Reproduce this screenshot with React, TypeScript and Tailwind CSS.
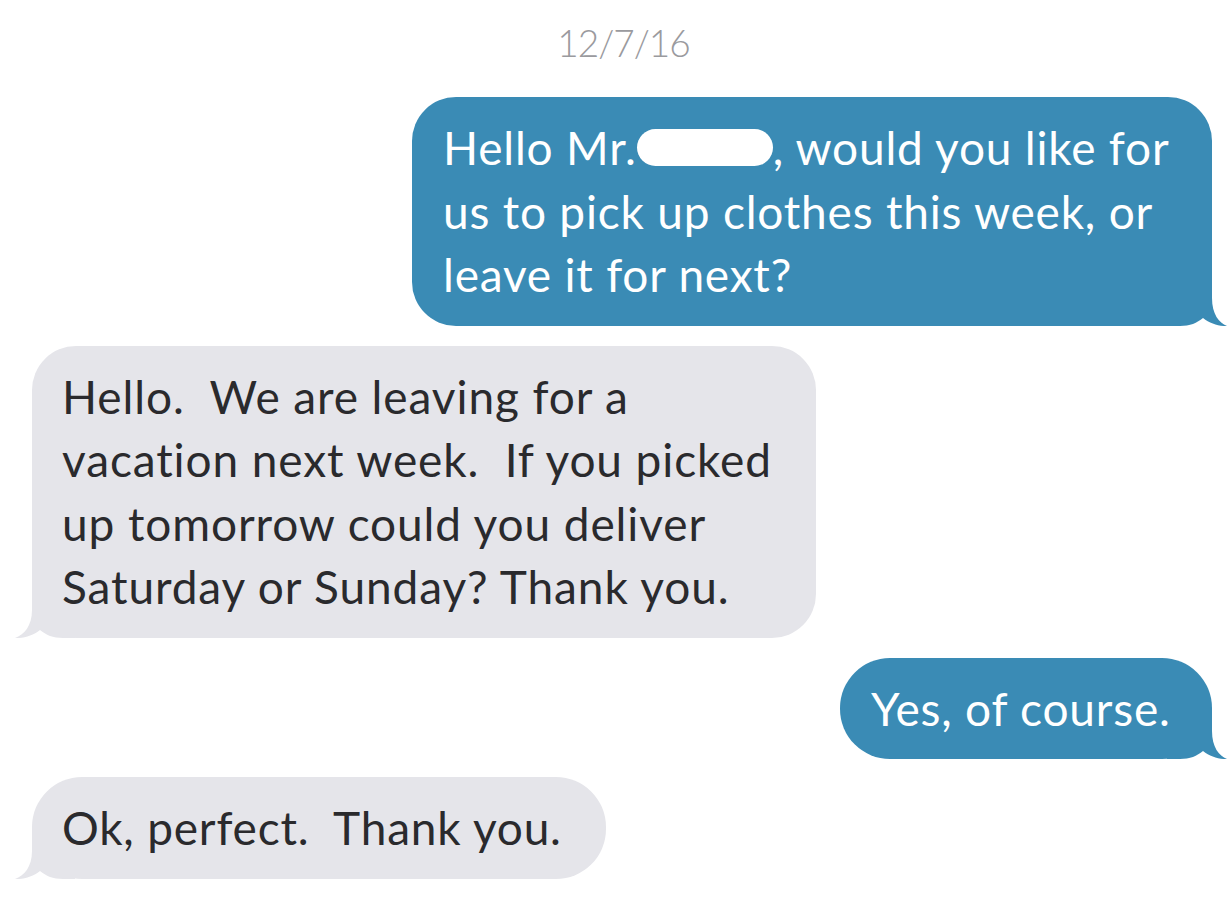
import React from "react";

const FONT = { fontFamily: "Lato, 'Open Sans', 'Noto Sans', sans-serif" };

function TailLeft() {
  return (
    <svg
      className="absolute bottom-0 left-[-17px]"
      width="60"
      height="50"
      viewBox="0 0 60 50"
      aria-hidden="true"
    >
      <path
        d="M17 0 L17 22 C17 38 9 47 0 50 C9 50.5 18 47.5 25 42 C31 47 38 50 48 50 L60 50 L60 0 Z"
        fill="#e5e5ea"
      />
    </svg>
  );
}

function TailRight() {
  return (
    <svg
      className="absolute bottom-0 right-[-15px]"
      width="60"
      height="50"
      viewBox="0 0 60 50"
      aria-hidden="true"
    >
      <path
        d="M45 0 L45 22 C45 38 52 47 60 50 C52 50.5 43 47.5 36 42 C30 47 23 50 13 50 L0 50 L0 0 Z"
        fill="#3a8bb5"
      />
    </svg>
  );
}

export default function App() {
  return (
    <div
      className="w-[1231px] h-[921px] bg-white overflow-hidden flex flex-col"
      style={FONT}
    >
      <div className="pt-[21px] pl-[16px] text-center text-[37px] leading-[44px] font-light tracking-[-1px] text-[#9a9a9e]">
        12/7/16
      </div>

      <div className="mt-[32px] flex flex-col gap-[20px]">
        {/* outgoing 1 */}
        <div className="flex justify-end pr-[19px]">
          <div className="relative w-[800px] rounded-[44px] bg-[#3a8bb5] pl-[31px] pr-[20px] py-[19px] text-[46px] leading-[63.5px] tracking-[0.8px] text-white whitespace-pre">
            <div className="relative z-10">
              Hello Mr.
              <span className="inline-block w-[136px] h-[37px] rounded-full bg-white align-baseline -mb-[1px]" />
              , would you like for
              <br />
              us to pick up clothes this week, or
              <br />
              leave it for next?
            </div>
            <TailRight />
          </div>
        </div>

        {/* incoming 1 */}
        <div className="flex justify-start pl-[32px]">
          <div className="relative w-[784px] rounded-[44px] bg-[#e5e5ea] pl-[30px] pr-[20px] py-[19px] text-[46px] leading-[63.5px] tracking-[0.9px] text-[#2a2a2d] whitespace-pre">
            <div className="relative z-10">
              {"Hello.  We are leaving for a"}
              <br />
              {"vacation next week.  If you picked"}
              <br />
              {"up tomorrow could you deliver"}
              <br />
              {"Saturday or Sunday? Thank you."}
            </div>
            <TailLeft />
          </div>
        </div>

        {/* outgoing 2 */}
        <div className="flex justify-end pr-[19px]">
          <div className="relative w-[372px] rounded-[50px] bg-[#3a8bb5] pl-[31px] pr-[20px] py-[19px] text-[46px] leading-[63.5px] tracking-[0.8px] text-white whitespace-pre">
            <div className="relative z-10">Yes, of course.</div>
            <TailRight />
          </div>
        </div>

        {/* incoming 2 */}
        <div className="flex justify-start pl-[32px] -mt-[2px]">
          <div className="relative w-[574px] rounded-[50px] bg-[#e5e5ea] pl-[30px] pr-[20px] py-[19px] text-[46px] leading-[63.5px] tracking-[0.8px] text-[#2a2a2d] whitespace-pre">
            <div className="relative z-10">{"Ok, perfect.  Thank you."}</div>
            <TailLeft />
          </div>
        </div>
      </div>
    </div>
  );
}
